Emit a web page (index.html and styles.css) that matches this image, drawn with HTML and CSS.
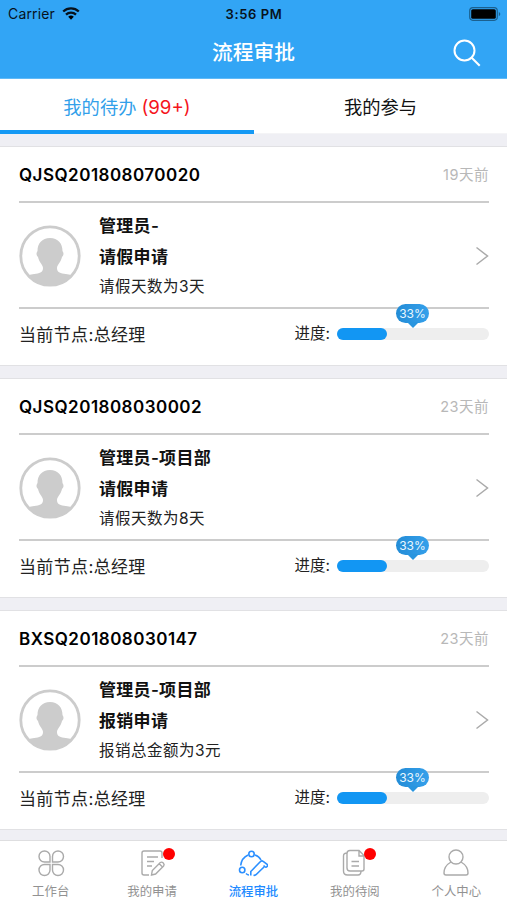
FILE: index.html
```html
<!DOCTYPE html>
<html lang="zh-CN">
<head>
<meta charset="utf-8">
<title>流程审批</title>
<link rel="stylesheet" href="styles.css">
</head>
<body>
<svg width="0" height="0" class="defs">
  <symbol id="avatar" viewBox="0 0 62 62"><clipPath id="c"><circle cx="31" cy="31" r="29"/></clipPath><circle cx="31" cy="31" r="29.2" fill="#fff" stroke="#ccc" stroke-width="2.8"/><path clip-path="url(#c)" fill="#ccc" d="M31 13c8 0 12.500 5.500 12.500 13 1.500 2 1.300 4.500-.5 6-1 5-5 8-5 11 0 3.500 2 5 7 5.800 5 .8 8 1.200 9 2.200V62H8V51c1-1 4-1.500 9-2.200 5-.8 7-2.300 7-5.800 0-3-4-6-5-11-1.800-1.500-2-4-.5-6C18.500 18.500 23 13 31 13z"/></symbol>
  <symbol id="chevron" viewBox="0 0 14 20"><path d="M1.500 1.500 12.500 10 1.500 18.500" fill="none" stroke="#aaa" stroke-width="1.500"/></symbol>
</svg>
<div class="app">
  <header class="header">
    <div class="status">
      <div class="carrier">Carrier <svg width="18" height="13" viewBox="0 0 18 13"><path d="M1.200 4.500a11.400 11.400 0 0 1 15.600 0M4 7.600a7.200 7.200 0 0 1 10 0" fill="none" stroke="#07121c" stroke-width="2.300"/><path d="M6.200 9.800a4 4 0 0 1 5.600 0L9 12.700z"/></svg></div>
      <div class="time">3:56 PM</div>
      <svg class="battery" width="32" height="14" viewBox="0 0 32 14"><rect x=".7" y=".7" width="27.600" height="12.600" rx="3.200" fill="none" stroke="#1b608f" stroke-width="1.200"/><rect x="2.200" y="2.200" width="24.600" height="9.600" rx="1.600"/><path d="M29.800 4.700q3 2.300 0 4.600z" fill="#1b608f"/></svg>
    </div>
    <h1 class="title">流程审批</h1>
    <svg class="search" width="28" height="28" viewBox="0 0 28 28" fill="none" stroke="#fff" stroke-width="2"><circle cx="11.500" cy="11.500" r="10"/><path d="m18.700 18.700 8 8"/></svg>
  </header>
  <nav class="tabs">
    <div class="tab tab-active">我的待办<span class="count">(99+)</span></div>
    <div class="tab">我的参与</div>
  </nav>
  <main class="list">
    <article class="card">
      <div class="card-head"><strong class="code">QJSQ201808070020</strong><span class="ago">19天前</span></div>
      <div class="card-body">
        <svg class="avatar"><use href="#avatar"/></svg>
        <div class="info"><b>管理员-</b><b>请假申请</b><span>请假天数为3天</span></div>
        <svg class="chevron"><use href="#chevron"/></svg>
      </div>
      <div class="card-foot"><span class="node">当前节点:总经理</span><span class="label">进度:</span><div class="progress"><div class="fill" style="width:33%"></div><span class="tip">33%</span></div></div>
    </article>
    <article class="card">
      <div class="card-head"><strong class="code">QJSQ201808030002</strong><span class="ago">23天前</span></div>
      <div class="card-body">
        <svg class="avatar"><use href="#avatar"/></svg>
        <div class="info"><b>管理员-项目部</b><b>请假申请</b><span>请假天数为8天</span></div>
        <svg class="chevron"><use href="#chevron"/></svg>
      </div>
      <div class="card-foot"><span class="node">当前节点:总经理</span><span class="label">进度:</span><div class="progress"><div class="fill" style="width:33%"></div><span class="tip">33%</span></div></div>
    </article>
    <article class="card">
      <div class="card-head"><strong class="code">BXSQ201808030147</strong><span class="ago">23天前</span></div>
      <div class="card-body">
        <svg class="avatar"><use href="#avatar"/></svg>
        <div class="info"><b>管理员-项目部</b><b>报销申请</b><span>报销总金额为3元</span></div>
        <svg class="chevron"><use href="#chevron"/></svg>
      </div>
      <div class="card-foot"><span class="node">当前节点:总经理</span><span class="label">进度:</span><div class="progress"><div class="fill" style="width:33%"></div><span class="tip">33%</span></div></div>
    </article>
  </main>
  <nav class="bottom">
    <div class="item"><svg class="icon" viewBox="0 0 30 30"><path d="M14 14H8.500A5.500 5.500 0 1 1 14 8.500zM16.500 14V8.500A5.500 5.500 0 1 1 22 14zM14 16.500V22a5.500 5.500 0 1 1-5.500-5.500zM16.500 16.500H22a5.500 5.500 0 1 1-5.500 5.500z"/></svg><span>工作台</span></div>
    <div class="item"><svg class="icon" viewBox="0 0 30 30"><path d="M25 10V5q0-2-2-2H7Q5 3 5 5v20q0 2 2 2h5M10 9h11M10 13.500h7M10 18h5M14.500 27l.8-4.500 8-8q1.500-1 3 .5t.3 3l-8 8zM22 15.500l3 3"/></svg><i class="dot"></i><span>我的申请</span></div>
    <div class="item item-active"><svg class="icon" viewBox="0 0 30 30"><circle cx="13.500" cy="6" r="2.700"/><circle cx="4.200" cy="22" r="2.700"/><path d="M2.700 17.500Q3.500 10 10 7M17 7q4 1.200 6 5M8 25.500q1.500 1.500 3 1.500M12.800 27.500v-4L22.500 13.500q1.300-1.300 2.700-.2l3.600 2.700q1.400 1.300.3 2.500t-2.500 0l-1-1M15.500 27.300q2 .2 3-1L26 19"/></svg><span>流程审批</span></div>
    <div class="item"><svg class="icon" viewBox="0 0 30 30"><path d="M10 2.500h9l5 5V21q0 2-2 2H10q-3 0-3-3V5.500q0-3 3-3zM19 2.500V8h5M7 5Q3.500 5 3.500 8v15q0 4 4 4H18q3 0 3-4M11.500 13.500H19M11.500 18H19"/></svg><i class="dot dot-read"></i><span>我的待阅</span></div>
    <div class="item"><svg class="icon" viewBox="0 0 30 30"><circle cx="15" cy="9" r="7"/><path d="M10 14Q3 18 3 25q0 2 2 2h20q2 0 2-2 0-7-7-11"/></svg><span>个人中心</span></div>
  </nav>
</div>
</body>
</html>
```
FILE: styles.css
```css
* { box-sizing: border-box; }
body { margin: 0; background: #efeff4; color: #111; font-family: Inter, "Noto Sans CJK SC", sans-serif; }
.defs { position: absolute; }
.app { height: 900px; display: flex; flex-direction: column; overflow: hidden; }
.header { height: 79px; flex: none; background: #32a5f5; position: relative; border-bottom: 1px solid #60baf7; }
.status { height: 27px; display: grid; grid-template-columns: 1fr 80px 1fr; align-items: center; padding: 0 6px 0 8px; color: #07121c; }
.carrier { font-size: 14px; letter-spacing: .15px; display: flex; align-items: center; gap: 7px; }
.time { font-size: 13px; font-weight: 600; text-align: center; letter-spacing: .6px; white-space: nowrap; margin-left: -1px; }
.battery { justify-self: end; }
.title { margin: 0; height: 50px; line-height: 51px; text-align: center; color: #fff; font-size: 20.700px; font-weight: 500; }
.search { position: absolute; left: 453px; top: 39px; }
.tabs { height: 55px; flex: none; display: grid; grid-template-columns: 254px 253px; background: #fff; border-bottom: 1px solid #f4f4f6; }
.tab { height: 55px; line-height: 56px; text-align: center; font-size: 18.300px; }
.tab-active { color: #32a0ea; border-bottom: 4px solid #1599f4; }
.count { color: #f5141c; margin-left: 5px; font-size: 18.700px; }
.list { flex: 1; min-height: 0; padding-top: 12px; }
.card { height: 220px; margin-bottom: 12px; padding: 0 18px 0 19px; background: #fff; border-top: 1px solid #e1e1e4; border-bottom: 1px solid #e1e1e4; }
.card-head { height: 56px; display: flex; align-items: center; justify-content: space-between; border-bottom: 2px solid #ccc; }
.code { font-size: 17px; font-weight: 600; letter-spacing: .48px; color: #000; margin-top: 1px; }
.ago { font-size: 14.500px; letter-spacing: .5px; color: #b8b8b8; margin: -1px 0 0; }
.card-body { height: 106px; display: flex; align-items: center; border-bottom: 2px solid #ccc; }
.avatar { width: 62px; height: 62px; flex: none; margin-top: 2px; }
.info { flex: 1; margin-left: 18px; display: grid; grid-template-rows: 31px 30px 29px; align-items: center; color: #222; font-size: 15.500px; letter-spacing: .5px; margin-top: -2px; }
.info b { color: #111; font-size: 17px; font-weight: 600; letter-spacing: .3px; }
.chevron { width: 14px; height: 20px; margin-top: 2px; }
.card-foot { height: 51px; display: flex; align-items: center; color: #222; }
.node { flex: 1; font-size: 17px; letter-spacing: .35px; margin-top: -3px; }
.label { font-size: 15.500px; margin-right: 7px; margin-top: -6px; }
.progress { position: relative; width: 152px; height: 12px; margin-top: -2px; background: #eee; border-radius: 6px; }
.fill { height: 12px; background: #1296f3; border-radius: 6px; }
.tip { position: absolute; left: 59px; top: -24px; width: 33px; height: 19px; border-radius: 10px; background: linear-gradient(90deg, #238cd6, #35a0eb); color: #e9f7ff; font-size: 12px; line-height: 19px; text-align: center; }
.tip::after { content: ""; position: absolute; left: 11px; top: 18px; border: 6px solid transparent; border-top-color: #2995df; border-bottom: 0; }
.bottom { height: 60px; flex: none; background: #fff; border-top: 1px solid #dedee0; display: grid; grid-template-columns: repeat(5, 1fr); }
.item { position: relative; display: flex; flex-direction: column; align-items: center; color: #929292; font-size: 12.400px; padding-top: 7px; }
.icon { width: 30px; height: 30px; fill: none; stroke: #aaa; stroke-width: 1.400; }
.item span { line-height: 18px; margin-top: 5px; white-space: nowrap; }
.item-active { color: #208aff; font-weight: 500; }
.item-active .icon { stroke: #2b8fff; stroke-width: 1.600; }
.dot { position: absolute; left: 62px; top: 7px; width: 12px; height: 12px; border-radius: 50%; background: #f00; }
.dot-read { left: 60px; }
```
